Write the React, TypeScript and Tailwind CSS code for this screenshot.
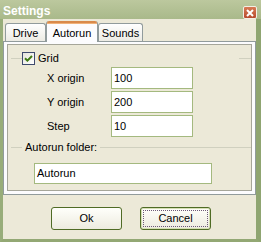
import React from "react";

const font = "font-['Liberation_Sans',Arial,sans-serif]";

function GroupLine({ className }: { className: string }) {
  return <div className={`h-px bg-[#D0D0BF] ${className}`} />;
}

function Field({ label, value }: { label: string; value: string }) {
  return (
    <div className="flex h-[22px] items-center">
      <span className="ml-[39px] w-[64px] leading-[13px]">{label}</span>
      <div className="flex h-[22px] w-[82px] items-center border border-[#A4B97F] bg-white pl-[2px]">{value}</div>
    </div>
  );
}

function Checkbox() {
  return (
    <div className="flex h-[13px] w-[13px] items-center justify-center border border-[#3F4A6E] bg-linear-to-br from-[#E4E3DA] to-white">
      <svg width="9" height="9" viewBox="0 0 9 9">
        <path d="M1 4.2 L3.4 6.6 L8 2" fill="none" stroke="#3E7A12" strokeWidth="2" />
      </svg>
    </div>
  );
}

function Tab({ label, active }: { label: string; active?: boolean }) {
  if (active)
    return (
      <div className="relative z-10 -mb-px flex h-[21px] w-[52px] flex-col rounded-t-[3px] border-x border-[#919B9C] bg-[#FCFCFE]">
        <div className="h-[2px] rounded-t-[3px] bg-[#D98A4B]" />
        <div className="h-px bg-[#F0B27A]" />
        <div className="flex flex-1 items-start justify-center pt-[1px]">{label}</div>
      </div>
    );
  return (
    <div className="flex h-[18px] items-center justify-center rounded-t-[3px] border-x border-t border-[#919B9C] bg-linear-to-b from-white to-[#ECEBE4] px-[6px] pt-[2px]">
      {label}
    </div>
  );
}

export default function App() {
  return (
    <div className={`flex h-[242px] w-[261px] flex-col overflow-hidden bg-[#ECE9D8] text-[11px] text-black ${font}`}>
      {/* title bar */}
      <div className="flex h-[19px] shrink-0 items-start justify-between bg-linear-to-b from-[#BCC89E] to-[#A9B98A] pl-[3px] pr-[4px]">
        <span className="pt-[4px] text-[12px] font-bold leading-[14px] text-white">Settings</span>
        <div className="mt-[6px] flex h-[13px] w-[14px] items-center justify-center rounded-[2px] border border-[#F3EFE6] bg-linear-to-b from-[#D77A55] to-[#B84B2E]">
          <svg width="8" height="8" viewBox="0 0 8 8">
            <path d="M1 1 L7 7 M7 1 L1 7" stroke="white" strokeWidth="2" />
          </svg>
        </div>
      </div>

      {/* window body with frame */}
      <div className="flex flex-1 flex-col border-b-[3px] border-l-[3px] border-r-[5px] border-b-[#93A874] border-l-[#98AD7A] border-r-[#8FA571]">
        {/* tab strip */}
        <div className="flex h-[22px] shrink-0 items-end pl-[2px]">
          <div className="flex w-[41px] flex-col"><Tab label="Drive" /></div>
          <Tab label="Autorun" active />
          <div className="flex w-[45px] flex-col"><Tab label="Sounds" /></div>
        </div>

        {/* tab pane */}
        <div className="h-[154px] shrink-0 border border-[#919B9C] bg-[#FCFCFE] px-[3px] pb-[3px] pt-[2px]">
          <div className="flex h-[147px] flex-col border border-[#A6A69A] bg-[#ECE9D8]">
            <div className="mt-[7px] flex h-[13px] items-center">
              <GroupLine className="ml-[3px] w-[11px]" />
              <Checkbox />
              <span className="ml-[3px] leading-[13px]">Grid</span>
              <div className="flex-1" />
              <GroupLine className="w-[12px]" />
            </div>
            <div className="mt-[2px] flex flex-col gap-[2px]">
              <Field label="X origin" value="100" />
              <Field label="Y origin" value="200" />
              <Field label="Step" value="10" />
            </div>
            <div className="mt-[4px] flex h-[13px] items-center">
              <GroupLine className="ml-[3px] w-[11px]" />
              <span className="mx-[3px] leading-[13px]">Autorun folder:</span>
              <GroupLine className="flex-1" />
            </div>
            <div className="ml-[26px] mt-[9px] flex h-[21px] w-[178px] items-center border border-[#A4B97F] bg-white pl-[2px]">
              Autorun
            </div>
          </div>
        </div>

        {/* buttons */}
        <div className="mt-[12px] flex gap-[18px] pl-[48px]">
          <button className="flex h-[23px] w-[71px] items-center justify-center rounded-[3px] border border-[#4F6B25] bg-linear-to-b from-[#FFFFFB] to-[#EDEBDF] text-[11px]">
            Ok
          </button>
          <button className="flex h-[23px] w-[71px] items-center justify-center rounded-[3px] border border-[#4F6B25] bg-linear-to-b from-[#FFFFFB] to-[#EDEBDF] p-[2px] text-[11px] shadow-[inset_0_0_0_1px_#D6DFB4]">
            <div className="flex h-full w-full items-center justify-center border border-dotted border-[#6E5A78]">Cancel</div>
          </button>
        </div>
      </div>
    </div>
  );
}
